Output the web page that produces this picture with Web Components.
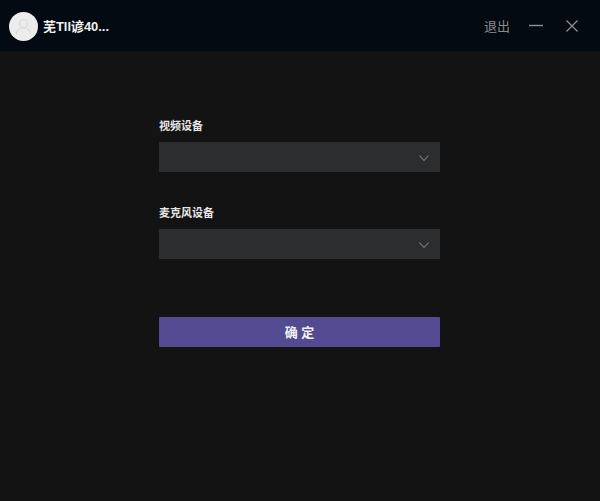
<!DOCTYPE html>
<html>
<head>
<meta charset="utf-8">
<title>设备</title>
<style>
    html, body { margin: 0; height: 100%; background: #131313; }
    body { font-family: "Liberation Sans", "Noto Sans CJK SC", sans-serif; color: #eee; }
</style>
</head>
<body>
<app-window>
    <title-bar slot="bar" name="芜Tll谚40..."></title-bar>
    <device-select label="视频设备"></device-select>
    <device-select label="麦克风设备" style="margin-top:33px"></device-select>
    <ok-button style="margin-top:58px">确 定</ok-button>
</app-window>
<script>
class AppWindow extends HTMLElement {
    constructor() {
        super();
        this.attachShadow({ mode: "open" });
        this.shadowRoot.innerHTML = `
            <style>
                :host { display: flex; flex-direction: column; height: 501px; background: #131313; }
                main { width: 281px; margin: 0 0 0 159px; padding-top: 67px; display: flex; flex-direction: column; }
            </style>
            <slot name="bar"></slot>
            <main><slot></slot></main>
        `;
    }
}

class TitleBar extends HTMLElement {
    constructor() {
        super();
        this.attachShadow({ mode: "open" });
        this.shadowRoot.innerHTML = `
            <style>
                :host { display: flex; align-items: center; height: 51px; background: #030a12; padding: 0 22px 0 9px; }
                .avatar { width: 29px; height: 29px; margin-top: 2px; border-radius: 50%; background: #ececec; display: flex; align-items: center; justify-content: center; }
                .name { margin-left: 5px; font-size: 13px; font-weight: bold; letter-spacing: -0.05px; color: #f0f0f0; white-space: nowrap; }
                .logout { margin-left: auto; font-size: 13px; color: #8a8a8a; }
                .min { margin-left: 19px; }
                .close { margin-left: 23px; }
                svg { display: block; }
            </style>
            <div class="avatar">
                <svg width="19" height="19" viewBox="0 0 19 19" fill="none" stroke="#d8d8d8" stroke-width="1.2">
                    <circle cx="9.5" cy="6.5" r="4"/>
                    <path d="M2.5 17c0-3.8 3-6 7-6s7 2.2 7 6"/>
                </svg>
            </div>
            <span class="name"></span>
            <span class="logout">退出</span>
            <svg class="min" width="14" height="13" viewBox="0 0 14 13" stroke="#8f8f8f" stroke-width="1.4"><path d="M0 6.5h14"/></svg>
            <svg class="close" width="12" height="12" viewBox="0 0 12 12" stroke="#8f8f8f" stroke-width="1.3" fill="none"><path d="M.5.5l11 11M11.5.5l-11 11"/></svg>
        `;
    }

    connectedCallback() {
        this.shadowRoot.querySelector(".name").textContent = this.getAttribute("name");
    }
}

class DeviceSelect extends HTMLElement {
    constructor() {
        super();
        this.attachShadow({ mode: "open" });
        this.shadowRoot.innerHTML = `
            <style>
                :host { display: block; }
                label { display: block; font-size: 11px; font-weight: bold; line-height: 16px; color: #e6e6e6; margin-bottom: 8px; }
                .box { height: 30px; background: #2c2d2f; display: flex; align-items: center; justify-content: flex-end; padding-right: 11px; }
                svg { display: block; margin-top: 1px; }
            </style>
            <label></label>
            <div class="box">
                <svg width="10" height="6" viewBox="0 0 10 6" fill="none" stroke="#7b7d80" stroke-width="1.1"><path d="M.5.5l4.5 5 4.5-5"/></svg>
            </div>
        `;
    }

    connectedCallback() {
        this.shadowRoot.querySelector("label").textContent = this.getAttribute("label");
    }
}

class OkButton extends HTMLElement {
    constructor() {
        super();
        this.attachShadow({ mode: "open" });
        this.shadowRoot.innerHTML = `
            <style>
                :host { display: flex; align-items: center; justify-content: center; box-sizing: border-box; height: 30px; padding-bottom: 2px; background: #544a92; border-radius: 1px; color: #f2f2f2; font-size: 13px; font-weight: bold; }
            </style>
            <slot></slot>
        `;
    }
}

customElements.define("app-window", AppWindow);
customElements.define("title-bar", TitleBar);
customElements.define("device-select", DeviceSelect);
customElements.define("ok-button", OkButton);
</script>
</body>
</html>
